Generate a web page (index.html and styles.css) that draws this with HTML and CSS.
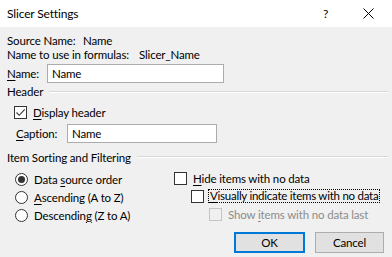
FILE: index.html
```html
<!DOCTYPE html>
<html lang="en">
<head>
    <meta charset="UTF-8">
    <title>Slicer Settings</title>
    <link rel="stylesheet" href="styles.css">
</head>
<body>
    <div class="dialog">
        <div class="titlebar">
            <span class="title">Slicer Settings</span>
            <span class="help">?</span>
            <svg class="close" width="11" height="11" viewBox="0 0 11 11">
                <path d="M0.5 0.5 L10.5 10.5 M10.5 0.5 L0.5 10.5" stroke="#000" stroke-width="1" fill="none"/>
            </svg>
        </div>

        <div class="content">
            <div class="info"><span class="lbl-src">Source Name:</span><span>Name</span></div>
            <div class="info"><span class="lbl-formula">Name to use in formulas:</span><span>Slicer_Name</span></div>

            <div class="field-row name-row">
                <label class="lbl-name"><u>N</u>ame:</label>
                <div class="textbox name-box">Name</div>
            </div>

            <!-- Header group -->
            <div class="group-title header-title"><span>Header</span><span class="rule"></span></div>
            <div class="check-row display-row">
                <span class="checkbox">
                    <svg width="11" height="11" viewBox="0 0 11 11"><path d="M1.5 5.5 L4.2 8.3 L9.8 2.3" stroke="#333" stroke-width="1.1" fill="none"/></svg>
                </span>
                <span class="check-text"><u>D</u>isplay header</span>
            </div>
            <div class="field-row caption-row">
                <label class="lbl-caption"><u>C</u>aption:</label>
                <div class="textbox caption-box">Name</div>
            </div>

            <!-- Sorting group -->
            <div class="group-title sort-title"><span>Item Sorting and Filtering</span><span class="rule"></span></div>
            <div class="options">
                <div class="col-left">
                    <div class="radio-row"><span class="radio selected"></span><span class="radio-text">Data <u>s</u>ource order</span></div>
                    <div class="radio-row"><span class="radio"></span><span class="radio-text"><u>A</u>scending (A to Z)</span></div>
                    <div class="radio-row"><span class="radio"></span><span class="radio-text">Descendin<u>g</u> (Z to A)</span></div>
                </div>
                <div class="col-right">
                    <div class="opt-row"><span class="checkbox"></span><span class="check-text"><u>H</u>ide items with no data</span></div>
                    <div class="opt-row indent-1"><span class="checkbox"></span><span class="check-text focus"><u>V</u>isually indicate items with no data</span></div>
                    <div class="opt-row indent-2 disabled"><span class="checkbox"></span><span class="check-text">Show <u>i</u>tems with no data last</span></div>
                </div>
            </div>

            <div class="buttons">
                <button class="btn btn-ok">OK</button>
                <button class="btn btn-cancel">Cancel</button>
            </div>
        </div>
    </div>
</body>
</html>
```

FILE: styles.css
```css
body {
    margin: 0;
    font-family: Lato, "Noto Sans", sans-serif;
    font-size: 11.5px;
    letter-spacing: -0.15px;
    color: #000;
    background: #f0f0f0;
    white-space: nowrap;
}
u {
    text-underline-offset: 2px;
}
.dialog {
    width: 392px;
    height: 257px;
    background: #f0f0f0;
    overflow: hidden;
}
.titlebar {
    height: 27px;
    background: #fff;
    display: flex;
    align-items: center;
    padding-left: 7px;
    font-size: 12px;
}
.title {
    flex: 1;
}
.help {
    width: 6px;
    margin-right: 34px;
}
.close {
    margin-right: 18px;
}
.content {
    padding: 7px 4px 0 7px;
}
.info {
    height: 14px;
    line-height: 14px;
    display: flex;
}
.info span, label {
    flex: none;
}
.lbl-src {
    width: 76px;
}
.lbl-formula {
    width: 132px;
}
.field-row {
    display: flex;
    align-items: center;
    height: 19px;
}
.name-row {
    margin-top: 2px;
}
.lbl-name {
    width: 40px;
}
.textbox {
    box-sizing: border-box;
    height: 19px;
    line-height: 17px;
    background: #fff;
    border: 1px solid #acacac;
    padding-left: 4px;
}
.name-box {
    width: 177px;
}
.group-title {
    display: flex;
    align-items: center;
    height: 15px;
}
.group-title .rule {
    flex: 1;
    border-top: 1px solid #d7d7d7;
    border-bottom: 1px solid #fff;
    margin-left: 6px;
}
.header-title {
    margin-top: 1px;
}
.check-row {
    display: flex;
    align-items: center;
    height: 14px;
}
.display-row {
    margin-top: 6px;
    padding-left: 7px;
}
.checkbox {
    box-sizing: border-box;
    width: 13px;
    height: 13px;
    border: 1px solid #333;
    background: #fff;
    display: flex;
    align-items: center;
    justify-content: center;
    flex: none;
}
.check-text {
    margin-left: 6px;
}
.caption-row {
    margin-top: 5px;
    padding-left: 9px;
}
.lbl-caption {
    width: 51px;
}
.caption-box {
    width: 150px;
}
.sort-title {
    margin-top: 7px;
    height: 14px;
}
.options {
    display: flex;
    margin-top: 5px;
}
.col-left {
    width: 159px;
    flex: none;
    padding-left: 8px;
    padding-top: 1px;
}
.radio-row, .opt-row {
    display: flex;
    align-items: center;
    height: 18px;
}
.radio {
    box-sizing: border-box;
    width: 13px;
    height: 13px;
    border: 1px solid #333;
    border-radius: 50%;
    background: #fff;
    display: flex;
    align-items: center;
    justify-content: center;
    flex: none;
}
.radio.selected::after {
    content: "";
    width: 7px;
    height: 7px;
    border-radius: 50%;
    background: #333;
}
.radio-text {
    margin-left: 6px;
}
.indent-1 {
    padding-left: 17px;
}
.indent-2 {
    padding-left: 35px;
}
.focus {
    margin-left: 4px;
    padding: 0 1px;
    border: 1px dotted #000;
    line-height: 12px;
    letter-spacing: -0.25px;
}
.disabled {
    color: #8c8c8c;
}
.disabled .checkbox {
    border-color: #c4c4c4;
    background: #f0f0f0;
}
.buttons {
    display: flex;
    justify-content: flex-end;
    gap: 10px;
    margin-top: 8px;
    margin-right: 4px;
}
.btn {
    box-sizing: border-box;
    height: 21px;
    font-family: inherit;
    font-size: 11.5px;
    letter-spacing: inherit;
    color: #000;
    background: #e1e1e1;
    border: 1px solid #adadad;
    padding: 0;
}
.btn-ok {
    width: 71px;
    border: 2px solid #0078d7;
}
.btn-cancel {
    width: 69px;
}
```
